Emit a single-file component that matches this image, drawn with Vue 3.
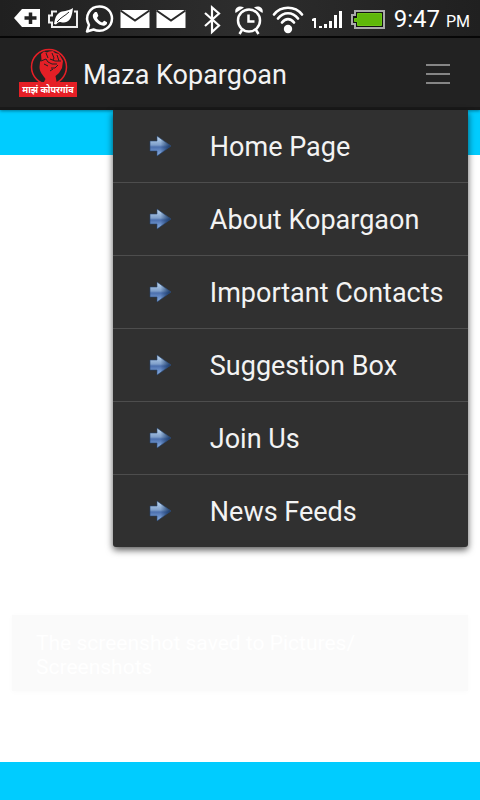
<script setup>
import { ref } from 'vue'

const open = ref(true)
const items = [
  'Home Page',
  'About Kopargaon',
  'Important Contacts',
  'Suggestion Box',
  'Join Us',
  'News Feeds'
]
</script>

<template>
  <div class="screen">
    <div class="status">
      <div class="group">
        <svg width="33" height="36" viewBox="11 0 33 36" aria-hidden="true">
          <path fill="#fff" d="M14 18 L22 9 H40 V27 H22 Z" />
          <path d="M30.500 12.500 V24 M24.500 18 H36.500" stroke="#222" stroke-width="3.500" />
        </svg>
        <svg width="38" height="36" viewBox="44 0 38 36" aria-hidden="true">
          <path fill="none" stroke="#eee" stroke-width="2" d="M57 11.500 H52 V15.500 H49 V22.500 H52 V27 H77 V11.500 H74" />
          <path fill="#fff" d="M54 24 C55 20 55 16 59 13 C63 10 67 12 73 8 C72 15 71 22 64 22.500 C61 22.700 60 21 58 22.500 L56 24.500 Z" />
          <path fill="none" stroke="#292929" stroke-width="1" d="M57 22 C61 17 65 16 69 12" />
        </svg>
        <svg width="34" height="36" viewBox="82 0 34 36" aria-hidden="true">
          <path fill="none" stroke="#fff" stroke-width="2.500" stroke-linejoin="round" d="M87 31.500 L89 25 C84 16 90 6.500 99.500 6.500 C107 6.500 112 12 112 18.500 C112 27 103 33.500 93.500 29.500 Z" />
          <path fill="#fff" d="M94.500 12.500 C96 11.700 97 12 97.500 13.500 L98.300 15.500 C98.500 16.300 97 17.300 97 18 C98 20 100 21.700 102 22.500 C103 22.500 103.700 20.700 104.500 20.800 L107 22.200 C107.500 24 105.500 25.700 103.500 25.700 C98 25.500 91.500 18.500 93 14.500 Z" />
        </svg>
        <svg v-for="n in 2" :key="n" width="36" height="36" viewBox="116 0 36 36" aria-hidden="true">
          <path fill="#fff" d="M120.500 10 H149.500 V28 H120.500 Z" />
          <path fill="none" stroke="#292929" stroke-width="2" d="M120.500 10.500 L135 20.500 L149.500 10.500" />
        </svg>
      </div>
      <div class="group">
        <svg width="27" height="36" viewBox="199 0 27 36" aria-hidden="true">
          <path fill="none" stroke="#fff" stroke-width="2.200" d="M205 13 L219 25.500 L212 32 V7.500 L219 13.500 L205 26" />
        </svg>
        <svg width="42" height="36" viewBox="226 0 42 36" aria-hidden="true">
          <circle cx="249" cy="20.500" r="11" fill="none" stroke="#fff" stroke-width="2.500" />
          <path fill="none" stroke="#fff" stroke-width="2.500" d="M248.500 14.500 V21.500 H254.500 M242 30 L239.500 34 M256 30 L258.500 34" />
          <path fill="#fff" d="M235.500 13 C234 8 239 5 244 7.500 Z M262.500 13 C264 8 259 5 254 7.500 Z" />
        </svg>
        <svg width="39" height="36" viewBox="268 0 39 36" aria-hidden="true">
          <path fill="none" stroke="#fff" stroke-width="2.700" stroke-linecap="round" d="M274 14.500 C281 5.500 295 5.500 302 14.500 M278 18.500 C283.500 11.500 292.500 11.500 298 18.500 M282 22.500 C285.500 18 290.500 18 294 22.500" />
          <circle cx="288" cy="29" r="4.200" fill="#fff" />
        </svg>
        <svg width="39" height="36" viewBox="307 0 39 36" aria-hidden="true">
          <path fill="#fff" d="M314 18 H316 V28 H314 V21 H312 V19 Z M319 26 H322 V28 H319 Z M324 24 H327 V28 H324 Z M329 21 H332 V28 H329 Z M334 15 H337 V28 H334 Z M339 11 H342 V28 H339 Z" />
        </svg>
        <svg width="43" height="36" viewBox="346 0 43 36" aria-hidden="true">
          <path fill="#111" stroke="#aaa" stroke-width="2" d="M355 11 H384 V28 H355 V24 H352 V15 H355 Z" />
          <path fill="#5fb70a" stroke="#6cc414" stroke-width="1" d="M357.500 13.500 H381.500 V25.500 H357.500 V21.500 H354.500 V18.500 H357.500 Z" />
        </svg>
        <span class="clock">9:47 <small>PM</small></span>
      </div>
    </div>

    <header class="bar">
      <svg class="logo" width="58" height="50" viewBox="0 0 58 50" role="img" aria-label="माझं कोपरगांव">
        <circle cx="30" cy="19" r="17.500" fill="none" stroke="#e51f26" stroke-width="1.500" />
        <path fill="#e51f26" d="M24 36 L26.500 31 C24 27 20.500 24 20.500 19 L21 14 L22.500 12 L22 6 L25 3.500 L28 4.500 L30 3.500 L34 3 L36 5 L40 6 L42 9.500 L44 13 L43 20 L40 25 L36.500 28 L38 36 Z" />
        <path fill="none" stroke="#222" stroke-width="1" d="M22 13 L27 11 L29 14 L33 16 L38 16 M27 5 L29 10 M33 5 L35 10 L34 12 M38 7 L40 13 M31 11 L36 13 L42 13 M25 16 L29 18 M32 20 L36 20 L39 17 M31 23 L34 21" />
        <rect x="0" y="34" width="58" height="15" fill="#e51f26" />
        <text x="29" y="45" text-anchor="middle" class="logo-text">माझं कोपरगांव</text>
      </svg>
      <h1>Maza Kopargoan</h1>
      <button class="toggle" type="button" aria-label="Menu" :aria-expanded="open" @click="open = !open">
        <span></span><span></span><span></span>
      </button>
      <nav v-if="open" class="menu">
        <a v-for="item in items" :key="item" href="#">
          <svg width="24" height="24" viewBox="0 0 24 24" aria-hidden="true">
            <defs>
              <linearGradient id="arrow" x1="0" y1="0" x2="0" y2="1">
                <stop offset="0" stop-color="#c3dcf3" />
                <stop offset="0.450" stop-color="#7f9fca" />
                <stop offset="0.550" stop-color="#4c70ae" />
                <stop offset="1" stop-color="#8db3e6" />
              </linearGradient>
              <linearGradient id="edge" x1="0" y1="0" x2="1" y2="0">
                <stop offset="0.500" stop-color="#173766" stop-opacity="0" />
                <stop offset="1" stop-color="#173766" />
              </linearGradient>
            </defs>
            <path fill="url(#arrow)" d="M1 7 H8 V2 L22 12 L8 22 V17 H1 Z" />
            <path fill="url(#edge)" stroke="#26456f" stroke-width="0.600" d="M1 7 H8 V2 L22 12 L8 22 V17 H1 Z" />
          </svg>
          <span>{{ item }}</span>
        </a>
      </nav>
    </header>

    <div class="band"></div>
    <main class="content">
      <p class="toast" role="status">The screenshot saved to Pictures/ Screenshots</p>
    </main>
    <footer class="foot"></footer>
  </div>
</template>

<style>
body {
  margin: 0;
  background: #fff;
}
</style>

<style scoped>
.screen {
  min-height: 100vh;
  display: flex;
  flex-direction: column;
  font-family: Roboto, "Noto Sans", sans-serif;
}
.status {
  display: flex;
  justify-content: space-between;
  height: 36px;
  padding: 0 10px 0 11px;
  background: linear-gradient(90deg, #202020, #2d2d2d 50%, #202020);
  border-bottom: 2px solid #080808;
  color: #fff;
}
.group {
  display: flex;
  align-items: center;
}
.group svg {
  flex: none;
}
.clock {
  margin-left: 5px;
  padding-top: 4px;
  font-size: 24px;
  line-height: 32px;
  white-space: nowrap;
}
.clock small {
  font-size: 16px;
}
.bar {
  position: relative;
  z-index: 1;
  display: flex;
  align-items: center;
  height: 69px;
  padding: 0 24px 0 19px;
  background: #222;
  border-bottom: 3px solid #191919;
  box-shadow: 0 1px 3px rgba(0, 0, 0, 0.4);
}
.logo {
  flex: none;
}
.logo-text {
  fill: #fff;
  font-size: 9px;
  font-weight: 700;
}
h1 {
  margin: 0 0 0 6px;
  padding-top: 4px;
  flex: 1;
  font-size: 27px;
  line-height: 32px;
  font-weight: 400;
  color: #f3f3f3;
}
.toggle {
  display: flex;
  flex-direction: column;
  gap: 7px;
  padding: 8px 6px 6px;
  border: 0;
  background: none;
}
.toggle span {
  width: 24px;
  height: 2px;
  background: #868686;
}
.menu {
  position: absolute;
  top: 72px;
  right: 12px;
  width: 74%;
  background: #303030;
  border-radius: 0 0 3px 3px;
  box-shadow: 0 3px 7px rgba(0, 0, 0, 0.65);
}
.menu a {
  display: flex;
  align-items: center;
  gap: 37px;
  height: 72px;
  padding-left: 36px;
  border-bottom: 1px solid #4d4d4d;
  font-size: 27px;
  line-height: 32px;
  color: #f3f3f3;
  text-decoration: none;
  white-space: nowrap;
}
.menu a span {
  padding-top: 2px;
}
.menu a:last-child {
  border-bottom: 0;
}
.band {
  height: 45px;
  background: #0cf;
}
.content {
  flex: 1;
  display: flex;
  flex-direction: column;
  justify-content: flex-end;
  padding: 0 12px 71px;
}
.toast {
  margin: 0;
  padding: 16px 88px 12px 24px;
  background: #fafafa;
  box-shadow: 0 1px 6px #fafafa;
  font-size: 21px;
  line-height: 24px;
  color: #fff;
}
.foot {
  height: 38px;
  background: #0cf;
}
</style>
